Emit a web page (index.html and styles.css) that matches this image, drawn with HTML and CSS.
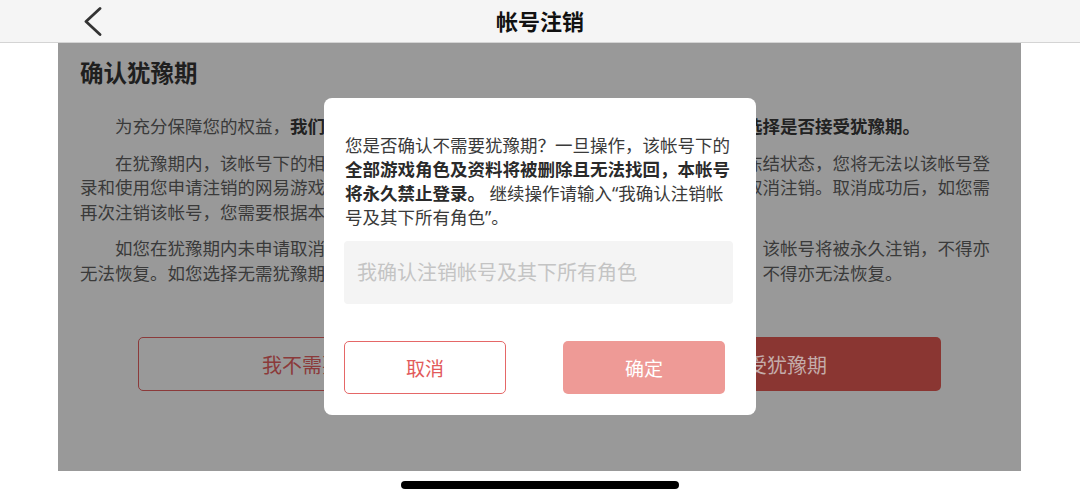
FILE: index.html
```html
<!DOCTYPE html>
<html lang="zh-CN">
<head>
  <meta charset="UTF-8">
  <meta name="viewport" content="width=device-width, initial-scale=1.0">
  <link rel="stylesheet" href="styles.css">
</head>
<body>
  <div class="header">
    <span class="back">
      <svg width="20" height="30" viewBox="0 0 20 30"><polyline points="16,2.5 2,15.5 16,28.5" fill="none" stroke="#333" stroke-width="2.8" stroke-linecap="round" stroke-linejoin="round"/></svg>
    </span>
    <div class="title">帐号注销</div>
    <span></span>
  </div>

  <div class="card">
    <h2 class="card-title">确认犹豫期</h2>
    <p class="para">为充分保障您的权益，<b>我们为您提供了七天的犹豫期，请您根据自身实际情况谨慎选择是否接受犹豫期。</b></p>
    <p class="para">在犹豫期内，该帐号下的相关游戏角色、虚拟财产及资料将被保留，帐号将处于被冻结状态，您将无法以该帐号登录和使用您申请注销的网易游戏。如您希望继续使用此帐号，您可在犹豫期内随时申请取消注销。取消成功后，如您需再次注销该帐号，您需要根据本页面提示重新提交申请。</p>
    <p class="para">如您在犹豫期内未申请取消注销，犹豫期届满后系统将自动为您完成帐号注销流程，该帐号将被永久注销，不得亦无法恢复。如您选择无需犹豫期，确认后帐号将立即被永久注销，相关游戏角色及资料，不得亦无法恢复。</p>
    <div class="card-actions">
      <button class="btn-line">我不需要犹豫期</button>
      <button class="btn-fill">我同意接受犹豫期</button>
    </div>
  </div>

  <div class="home-bar"></div>

  <div class="modal">
    <p class="modal-text">您是否确认不需要犹豫期？一旦操作，该帐号下的<b>全部游戏角色及资料将被删除且无法找回，本帐号将永久禁止登录。</b> 继续操作请输入“我确认注销帐号及其下所有角色”。</p>
    <input class="modal-input" type="text" placeholder="我确认注销帐号及其下所有角色">
    <div class="modal-actions">
      <button class="modal-cancel">取消</button>
      <button class="modal-ok">确定</button>
    </div>
  </div>
</body>
</html>
```

FILE: styles.css
```css
* {
  box-sizing: border-box;
}

body {
  margin: 0;
  background: #fff;
  font-family: "Noto Sans", "Noto Sans CJK SC", sans-serif;
  color: #333;
}

.header {
  height: 43px;
  background: #f5f5f5;
  border-bottom: 1px solid #d4d4d4;
  display: grid;
  grid-template-columns: 1fr auto 1fr;
  align-items: center;
}

.back {
  padding-left: 84px;
  display: flex;
  align-items: center;
  height: 42px;
}

.title {
  font-size: 22px;
  font-weight: bold;
  color: #111;
  line-height: 42px;
}

.card {
  margin: 0 59px 0 58px;
  height: 428px;
  background: #999;
  padding: 14px 30px 0 22px;
}

.card-title {
  margin: 0 0 25px;
  font-size: 23.5px;
  line-height: 32px;
  font-weight: bold;
  color: #1f1f1f;
}

.para {
  margin: 0 0 12px;
  font-size: 17.5px;
  line-height: 24.5px;
  text-indent: 2em;
  color: #3a3a3a;
}

.para b {
  color: #222;
}

.card-actions {
  margin-top: 52px;
  display: flex;
  justify-content: center;
  gap: 27px;
  padding-left: 8px;
}

.card-actions button {
  flex: none;
  width: 388px;
  height: 54px;
  border-radius: 5px;
  font-family: inherit;
  font-size: 20px;
}

.btn-line {
  background: transparent;
  border: 1.5px solid #8b3a3a;
  color: #8b3a3a;
}

.btn-fill {
  background: #8a3632;
  border: none;
  color: #c4acaa;
}

.home-bar {
  width: 278px;
  height: 8px;
  margin: 10px auto 0;
  background: #000;
  border-radius: 4px;
}

.modal {
  position: fixed;
  top: 98px;
  left: 324px;
  width: 432px;
  background: #fff;
  border-radius: 8px;
  padding: 35px 23px 21px 20px;
}

.modal-text {
  margin: 0 0 0 1px;
  font-size: 17.5px;
  line-height: 24px;
  color: #3a3a3a;
}

.modal-text b {
  color: #2a2a2a;
}

.modal-input {
  display: block;
  width: 100%;
  height: 63px;
  margin-top: 12px;
  border: none;
  border-radius: 4px;
  background: #f4f4f4;
  padding: 0 13px;
  font-family: inherit;
  font-size: 20px;
  outline: none;
}

.modal-input::placeholder {
  color: #c4c4c4;
}

.modal-actions {
  margin-top: 37px;
  display: flex;
  gap: 57px;
}

.modal-actions button {
  width: 162px;
  height: 53px;
  border-radius: 5px;
  font-family: inherit;
  font-size: 19px;
}

.modal-cancel {
  background: #fff;
  border: 1.5px solid #e56767;
  color: #e25a5a;
}

.modal-ok {
  background: #ee9a96;
  border: none;
  color: #fff;
}
```
